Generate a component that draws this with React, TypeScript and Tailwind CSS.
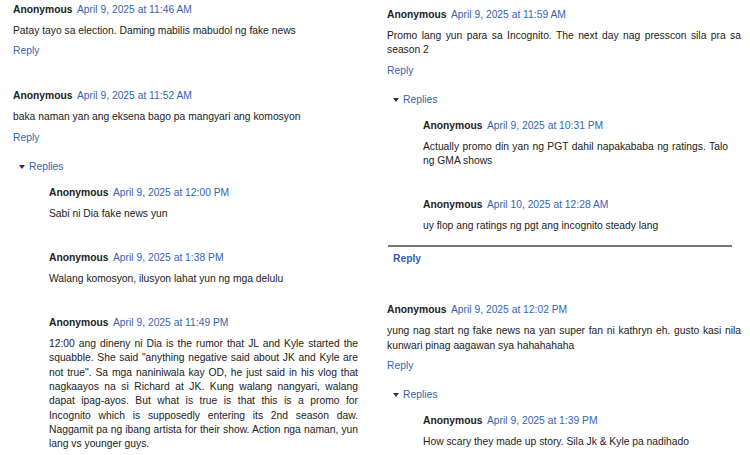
import React from "react";

type Comment = {
  date: string;
  body: string;
  replies?: Comment[];
  closed?: boolean;
};

const left: Comment[] = [
  { date: "April 9, 2025 at 11:46 AM", body: "Patay tayo sa election. Daming mabilis mabudol ng fake news" },
  {
    date: "April 9, 2025 at 11:52 AM",
    body: "baka naman yan ang eksena bago pa mangyari ang komosyon",
    replies: [
      { date: "April 9, 2025 at 12:00 PM", body: "Sabi ni Dia fake news yun" },
      { date: "April 9, 2025 at 1:38 PM", body: "Walang komosyon, ilusyon lahat yun ng mga delulu" },
      {
        date: "April 9, 2025 at 11:49 PM",
        body: '12:00 ang dineny ni Dia is the rumor that JL and Kyle started the squabble. She said "anything negative said about JK and Kyle are not true". Sa mga naniniwala kay OD, he just said in his vlog that nagkaayos na si Richard at JK. Kung walang nangyari, walang dapat ipag-ayos. But what is true is that this is a promo for Incognito which is supposedly entering its 2nd season daw. Naggamit pa ng ibang artista for their show. Action nga naman, yun lang vs younger guys.',
      },
    ],
  },
];

const right: Comment[] = [
  {
    date: "April 9, 2025 at 11:59 AM",
    body: "Promo lang yun para sa Incognito. The next day nag presscon sila pra sa season 2",
    closed: true,
    replies: [
      { date: "April 9, 2025 at 10:31 PM", body: "Actually promo din yan ng PGT dahil napakababa ng ratings. Talo ng GMA shows" },
      { date: "April 10, 2025 at 12:28 AM", body: "uy flop ang ratings ng pgt ang incognito steady lang" },
    ],
  },
  {
    date: "April 9, 2025 at 12:02 PM",
    body: "yung nag start ng fake news na yan super fan ni kathryn eh. gusto kasi nila kunwari pinag aagawan sya hahahahaha",
    replies: [{ date: "April 9, 2025 at 1:39 PM", body: "How scary they made up story. Sila Jk & Kyle pa nadihado" }],
  },
];

const Header = ({ date }: { date: string }) => (
  <div className="flex h-[14px] items-center leading-[14px] whitespace-nowrap">
    <span className="font-bold text-[#222]">Anonymous</span>
    <span className="ml-[4.5px] text-[#3565b0]">{date}</span>
  </div>
);

const Thread = ({ c }: { c: Comment }) => (
  <div>
    <Header date={c.date} />
    <p className="mt-[7px] leading-[14.3px] text-justify text-[#222]">{c.body}</p>
    <div className="mt-[6px] leading-[14px] text-[#3565b0]">Reply</div>
    {c.replies && (
      <div className="mt-[15px]">
        <div className="flex items-center pl-[6px] leading-[14px] text-[#3565b0]">
          <span className="mr-[4px] h-0 w-0 border-x-[3px] border-t-[4px] border-x-transparent border-t-[#333]" />
          Replies
        </div>
        <div className="mt-[12px] flex flex-col gap-[30px] pl-[36px] pr-[13px]">
          {c.replies.map((r, i) => (
            <div key={i}>
              <Header date={r.date} />
              <p className="mt-[7px] leading-[14.3px] text-justify text-[#222]">{r.body}</p>
            </div>
          ))}
        </div>
        {c.closed && (
          <div className="mt-[12px] pr-[9px]">
            <div className="ml-px h-[2px] bg-[#777]" />
            <div className="mt-[5px] pl-[6px] font-bold leading-[14px] text-[#2f5fae]">Reply</div>
          </div>
        )}
      </div>
    )}
  </div>
);

export default function App() {
  return (
    <div className="flex h-[455px] w-[750px] overflow-hidden bg-white font-['Liberation_Sans',Arial,sans-serif] text-[10.3px]">
      <div className="w-[375px] pl-[13px] pr-[4px] pt-[3px]">
        <div className="flex flex-col gap-[31px]">
          {left.map((c, i) => (
            <Thread key={i} c={c} />
          ))}
        </div>
      </div>
      <div className="w-[375px] pl-[12px] pr-[9px] pt-[8px]">
        <div className="flex flex-col gap-[37px]">
          {right.map((c, i) => (
            <Thread key={i} c={c} />
          ))}
        </div>
      </div>
    </div>
  );
}
